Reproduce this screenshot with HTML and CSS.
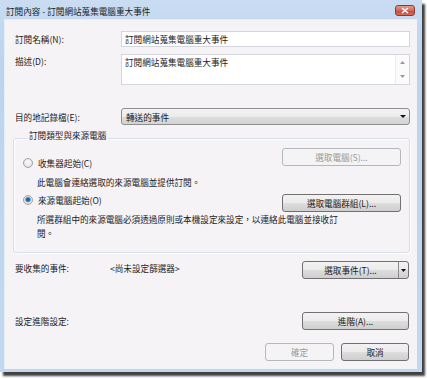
FILE: index.html
```html
<!DOCTYPE html>
<html lang="zh-Hant">
<head>
    <meta charset="UTF-8" />
    <title>訂閱內容</title>
    <link rel="stylesheet" href="styles.css">
</head>
<body>
<div class="window">
    <div class="titlebar">
        <span class="title">訂閱內容 - 訂閱網站蒐集電腦重大事件</span>
        <span class="close">
            <svg width="8" height="7" viewBox="0 0 8 7"><path d="M1 1 L7 6 M7 1 L1 6" stroke="#fff" stroke-width="1.6"/></svg>
        </span>
    </div>

    <div class="client">
        <div class="row name-row">
            <label class="lbl">訂閱名稱(N):</label>
            <div class="textbox">訂閱網站蒐集電腦重大事件</div>
        </div>

        <div class="row desc-row">
            <label class="lbl">描述(D):</label>
            <div class="textarea">
                <span class="textarea-text">訂閱網站蒐集電腦重大事件</span>
                <div class="vscroll">
                    <svg width="5" height="3" viewBox="0 0 5 3"><path d="M0 3 L2.5 0 L5 3 Z" fill="#9a9a9a"/></svg>
                    <svg width="5" height="3" viewBox="0 0 5 3"><path d="M0 0 L2.5 3 L5 0 Z" fill="#9a9a9a"/></svg>
                </div>
            </div>
        </div>

        <div class="row dest-row">
            <label class="lbl">目的地記錄檔(E):</label>
            <div class="combo">
                <span>轉送的事件</span>
                <svg width="6" height="3" viewBox="0 0 6 3"><path d="M0 0 L3 3 L6 0 Z" fill="#111"/></svg>
            </div>
        </div>

        <fieldset class="group">
            <legend>訂閱類型與來源電腦</legend>
            <div class="choice">
                <label class="radio-line"><span class="radio"></span>收集器起始(C)</label>
                <button class="btn group-btn" disabled>選取電腦(S)...</button>
            </div>
            <p class="note first-note">此電腦會連絡選取的來源電腦並提供訂閱。</p>
            <div class="choice second">
                <label class="radio-line"><span class="radio checked"></span>來源電腦起始(O)</label>
                <button class="btn group-btn">選取電腦群組(L)...</button>
            </div>
            <p class="note wrap-note">所選群組中的來源電腦必須透過原則或本機設定來設定，以連絡此電腦並接收訂閱。</p>
        </fieldset>

        <div class="row events-row">
            <label class="lbl short">要收集的事件:</label>
            <span class="value">&lt;尚未設定篩選器&gt;</span>
            <div class="btn split">
                <span class="split-main">選取事件(T)...</span>
                <span class="split-arrow">
                    <svg width="5" height="3" viewBox="0 0 5 3"><path d="M0 0 L2.5 3 L5 0 Z" fill="#111"/></svg>
                </span>
            </div>
        </div>

        <div class="row advanced-row">
            <label class="lbl">設定進階設定:</label>
            <button class="btn wide">進階(A)...</button>
        </div>

        <div class="actions">
            <button class="btn ok" disabled>確定</button>
            <button class="btn cancel">取消</button>
        </div>
    </div>
</div>
</body>
</html>
```

FILE: styles.css
```css
body {
  margin: 0;
  width: 427px;
  height: 379px;
  background-color: #ffffff;
  font-family: "Noto Sans CJK TC", "Noto Sans", sans-serif;
  font-size: 8.6px;
  color: #1b1b1b;
  overflow: hidden;
}

.window {
  width: 422px;
  height: 372px;
  box-sizing: border-box;
  padding: 0 5px 3px 4px;
  background: linear-gradient(#c9dcf2, #bcd3ee 60px, #c3d8f0);
  box-shadow: 3px 4px 2px rgba(30, 30, 30, 0.85);
  display: flex;
  flex-direction: column;
}

.titlebar {
  height: 19px;
  display: flex;
  align-items: flex-start;
  flex-shrink: 0;
}

.title {
  margin: 5px 0 0 2px;
  line-height: 12px;
  color: #1e1e1e;
}

.close {
  margin: 5px 2px 0 auto;
  width: 20px;
  height: 11px;
  box-sizing: border-box;
  border: 1px solid #8e3a30;
  border-radius: 3px;
  background: linear-gradient(#e49a90, #d2685b 50%, #c04a3a 51%, #d86a56);
  display: flex;
  align-items: center;
  justify-content: center;
}

.client {
  flex: 1;
  background-color: #f6f3f7;
  box-shadow: inset 1px 1px 0 #e4ecf6;
  padding: 12px 7px 0 9px;
  display: flex;
  flex-direction: column;
}

.row {
  display: flex;
  align-items: center;
}

.lbl {
  width: 106px;
  padding-left: 2px;
  flex-shrink: 0;
  line-height: 14px;
}

.textbox {
  flex: 1;
  height: 16px;
  box-sizing: border-box;
  border: 1px solid #d3d7dd;
  background-color: #ffffff;
  padding-left: 3px;
  line-height: 14px;
}

.desc-row {
  margin-top: 7px;
  align-items: flex-start;
}

.textarea {
  flex: 1;
  height: 31px;
  box-sizing: border-box;
  border: 1px solid #d3d7dd;
  background-color: #ffffff;
  display: flex;
}

.textarea-text {
  flex: 1;
  padding: 1px 0 0 3px;
  line-height: 12px;
}

.vscroll {
  width: 13px;
  border-left: 1px solid #ececec;
  background-color: #fbfbfb;
  display: flex;
  flex-direction: column;
  justify-content: space-between;
  align-items: center;
  padding: 6px 0 6px;
}

.dest-row {
  margin-top: 23px;
}

.combo {
  flex: 1;
  height: 17px;
  box-sizing: border-box;
  border: 1px solid #8e8f8f;
  border-radius: 3px;
  background: linear-gradient(#f3f3f3, #ebebeb 50%, #dddddd 51%, #d3d3d3);
  display: flex;
  align-items: center;
  justify-content: space-between;
  padding: 0 3px 0 4px;
}

.group {
  margin: 4px 0 0;
  padding: 0 8px 12px 9px;
  border: 1px solid #d6dee7;
  border-radius: 3px;
  box-shadow: inset 1px 1px 0 #ffffff, 1px 1px 0 #ffffff;
  min-width: 0;
}

.group legend {
  margin-left: 4px;
  padding: 0 2px 7px;
  line-height: 12px;
}

.choice {
  display: flex;
  justify-content: space-between;
  align-items: flex-start;
}

.choice.second {
  margin-top: 6px;
}

.radio-line {
  display: flex;
  align-items: center;
  margin-top: 9px;
  line-height: 12px;
}

.second .radio-line {
  margin-top: 0;
}

.radio {
  width: 10px;
  height: 10px;
  box-sizing: border-box;
  margin-right: 5px;
  border: 1px solid #9ea3a8;
  border-radius: 50%;
  background: radial-gradient(circle at 50% 40%, #fdfdfd, #dadada);
}

.radio.checked {
  background: radial-gradient(circle at 50% 45%, #1c4e7e 0, #2b6fae 1.6px, #6fb0e0 2.6px, #e9e9e9 3.2px, #d8d8d8);
}

.note {
  margin: 0;
  padding-left: 14px;
}

.first-note {
  margin-top: 7px;
  line-height: 12px;
}

.wrap-note {
  width: 305px;
  line-height: 14px;
}

.btn {
  height: 18px;
  box-sizing: border-box;
  border: 1px solid #707070;
  border-radius: 3px;
  background: linear-gradient(#f2f2f2, #ebebeb 50%, #dddddd 51%, #cfcfcf);
  font-family: inherit;
  font-size: 8.6px;
  color: #1b1b1b;
  padding: 0;
  line-height: 16px;
  text-align: center;
}

.btn:disabled {
  border-color: #b4b8bb;
  background: #f4f4f4;
  color: #9a9a9a;
}

.group-btn {
  width: 119px;
}

.events-row {
  margin-top: 8px;
  padding-right: 1px;
  align-items: flex-start;
}

.lbl.short {
  width: 95px;
}

.value {
  line-height: 14px;
}

.split {
  margin-left: auto;
  width: 107px;
  display: flex;
}

.split-main {
  flex: 1;
  text-align: center;
}

.split-arrow {
  width: 9px;
  border-left: 1px solid #8a8a8a;
  display: flex;
  align-items: center;
  justify-content: center;
}

.advanced-row {
  margin-top: 33px;
  padding-right: 1px;
  justify-content: space-between;
}

.wide {
  width: 107px;
}

.actions {
  margin-top: 13px;
  padding-right: 1px;
  display: flex;
  justify-content: flex-end;
  gap: 7px;
}

.ok {
  width: 69px;
}

.cancel {
  width: 68px;
}
```
